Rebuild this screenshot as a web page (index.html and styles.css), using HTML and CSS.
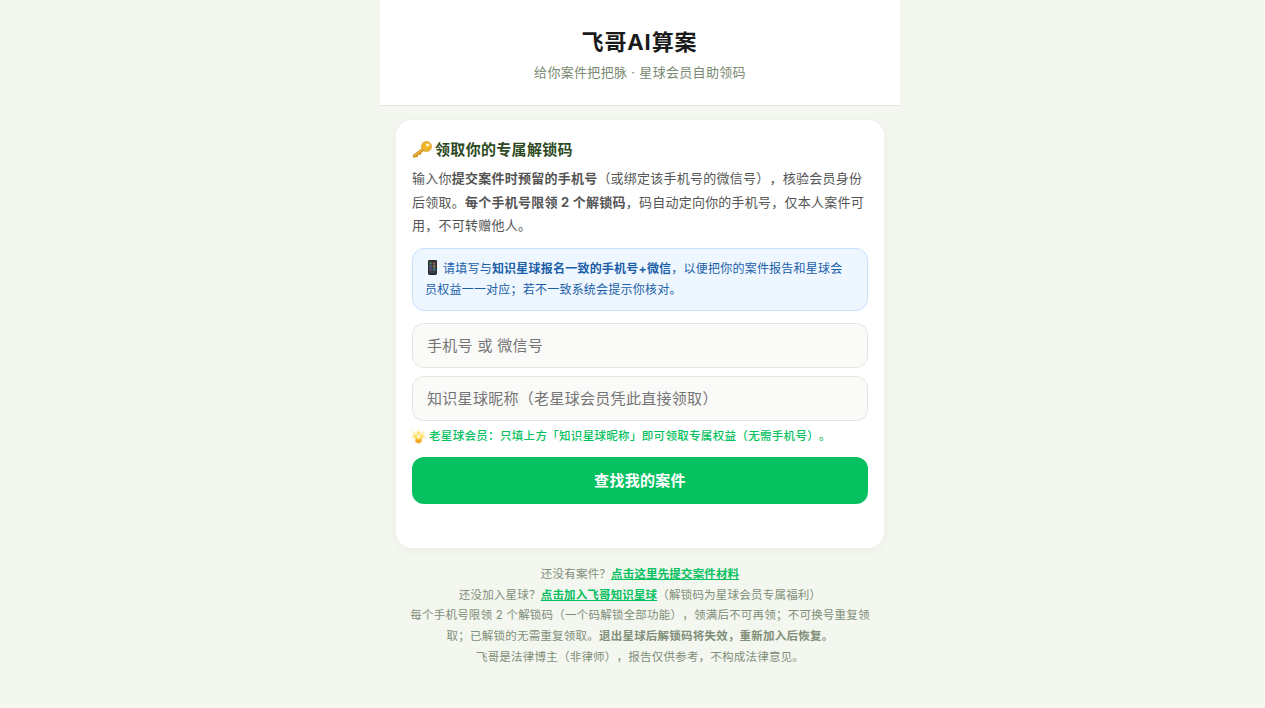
FILE: index.html
```html
<!DOCTYPE html>
<html lang="zh-CN">
<head>
<meta charset="utf-8">
<title>飞哥AI算案</title>
<link rel="stylesheet" href="styles.css">
</head>
<body>
<div class="page">
  <header class="header">
    <h1 class="title">飞哥AI算案</h1>
    <p class="subtitle">给你案件把把脉 · 星球会员自助领码</p>
  </header>
  <main class="main">
    <section class="card">
      <h2 class="card-title"><svg class="icon-key" viewBox="0 0 21 19" aria-hidden="true"><path d="M12 6.5 1.2 14.6c-.5.4-.6.9-.4 1.4l.7 1.4c.3.5.8.6 1.2.3l1.4-1.1 1 .6 1.2-.9-.1-1.2 1.2-.8 1 .5 1.2-.9-.1-1.2 3.6-2.7z" fill="#c98f1c"/><path d="M1.6 15.2 12.4 7l.9 1.1L2.6 16.6z" fill="#e9b53a"/><circle cx="15.2" cy="5.8" r="5.4" fill="#f0b429"/><circle cx="15.2" cy="5.8" r="5.4" fill="none" stroke="#d4941a" stroke-width=".6"/><ellipse cx="16.4" cy="4.2" rx="2" ry="1.6" fill="#fff3c4"/></svg>领取你的专属解锁码</h2>
      <p class="desc">输入你<strong>提交案件时预留的手机号</strong>（或绑定该手机号的微信号），核验会员身份后领取。<strong>每个手机号限领 2 个解锁码</strong>，码自动定向你的手机号，仅本人案件可用，不可转赠他人。</p>
      <div class="notice"><svg class="icon-phone" viewBox="0 0 15 15" aria-hidden="true"><rect x="3" y="0" width="9" height="15" rx="1.4" fill="#2b2b30"/><rect x="4" y="1.6" width="7" height="11.4" fill="#3a4048"/><rect x="4.6" y="2.4" width="2" height="2" fill="#4a8a5a"/><rect x="8.2" y="2.4" width="2" height="2" fill="#a0584a"/><rect x="4.6" y="5.4" width="2" height="2" fill="#4a6aa0"/><rect x="8.2" y="5.4" width="2" height="2" fill="#a08a3a"/><rect x="4.6" y="8.4" width="2" height="2" fill="#8a4a8a"/><rect x="8.2" y="8.4" width="2" height="2" fill="#3a8a8a"/></svg>请填写与<strong>知识星球报名一致的手机号+微信</strong>，以便把你的案件报告和星球会员权益一一对应；若不一致系统会提示你核对。</div>
      <input class="field" type="text" placeholder="手机号 或 微信号">
      <input class="field" type="text" placeholder="知识星球昵称（老星球会员凭此直接领取）">
      <p class="hint"><svg class="icon-star" viewBox="0 0 14 14" aria-hidden="true"><path d="M1 .8 4.3 3.4 7 0l2.7 3.4L13 .8l-.6 4.6L14 8l-3.4 1.6L7 14 3.4 9.6 0 8l1.6-2.6z" fill="#fff0b8"/><path d="M7 2.4 8.6 5.6 12 6.2 9.5 8.6 10 12 7 10.4 4 12l.5-3.4L2 6.2l3.4-.6z" fill="#ffd54f"/><path d="M4.4 9.2 7 10.4l2.6-1.2L10 12l-3 1.8L4 12z" fill="#f7a823"/><circle cx="7" cy="6.8" r="1.8" fill="#fff6c8"/></svg>老星球会员：只填上方「知识星球昵称」即可领取专属权益（无需手机号）。</p>
      <button class="submit" type="button">查找我的案件</button>
    </section>
    <footer class="footer">
      <p>还没有案件？<a href="#">点击这里先提交案件材料</a></p>
      <p>还没加入星球？<a href="#">点击加入飞哥知识星球</a>（解锁码为星球会员专属福利）</p>
      <p>每个手机号限领 2 个解锁码（一个码解锁全部功能），领满后不可再领；不可换号重复领取；已解锁的无需重复领取。<strong>退出星球后解锁码将失效，重新加入后恢复。</strong></p>
      <p>飞哥是法律博主（非律师），报告仅供参考，不构成法律意见。</p>
    </footer>
  </main>
</div>
</body>
</html>
```
FILE: styles.css
```css
* { box-sizing: border-box; }
html, body { margin: 0; padding: 0; }
html { overflow: hidden; }
body {
  width: 1280px;
  background: #f4f6f0;
  font-family: Inter, "Noto Sans CJK SC", sans-serif;
  color: #1a1a1a;
  letter-spacing: 0.02em;
  text-spacing-trim: space-all;
  font-feature-settings: "chws" 0;
}
.page { width: 520px; margin: 0 auto; }
.header {
  background: #fff;
  border-bottom: 1px solid #e5e5df;
  padding: 28px 20px 23px;
  text-align: center;
}
.title {
  margin: 0;
  padding-right: 1px;
  font-size: 22px;
  line-height: 28px;
  font-weight: 700;
  letter-spacing: 0.9px;
  color: #1a1a1a;
}
.subtitle {
  margin: 6px 0 0;
  font-size: 13px;
  line-height: 20px;
  color: #7a8a72;
}
.main { padding: 14px 16px 0; }
.card {
  background: #fff;
  border-radius: 16px;
  box-shadow: 0 2px 12px rgba(0, 0, 0, 0.04);
  padding: 19px 16px 44px;
}
.card-title {
  display: flex;
  align-items: center;
  margin: 0 0 6.4px;
  height: 22px;
  font-size: 15px;
  line-height: 22px;
  font-weight: 700;
  color: #2d4a22;
}
.icon-key { width: 20px; height: 18px; margin-right: 3px; flex: none; }
.desc {
  margin: 0 0 10.4px;
  font-size: 13px;
  line-height: 23.4px;
  letter-spacing: 0.24px;
  color: #555;
}
.desc strong { font-weight: 700; }
.notice {
  background: #eef6ff;
  border: 1px solid #c8e0fb;
  border-radius: 12px;
  padding: 9px 14px 10px 12px;
  font-size: 12px;
  line-height: 21px;
  letter-spacing: 0.22px;
  color: #1a5fa8;
  margin-bottom: 12px;
}
.icon-phone { width: 15px; height: 15px; margin-right: 3px; vertical-align: -2px; }
.field {
  display: block;
  width: 100%;
  height: 45px;
  margin-bottom: 8px;
  padding: 0 14px;
  background: #fafaf8;
  border: 1px solid #e5e5df;
  border-radius: 12px;
  font-family: inherit;
  font-size: 15px;
  font-feature-settings: "chws" 0;
  letter-spacing: 0.3px;
  color: #1a1a1a;
  outline: none;
}
.field::placeholder { color: #757575; opacity: 1; }
.hint {
  display: flex;
  align-items: center;
  height: 14px;
  margin: 0 0 14px;
  font-size: 11.5px;
  line-height: 14px;
  font-weight: 500;
  color: #07c160;
}
.icon-star { width: 15px; height: 15px; margin: 0 3px 0 -1px; flex: none; }
.submit {
  display: block;
  width: 100%;
  height: 47px;
  padding: 0 0 2px;
  border: 0;
  border-radius: 12px;
  background: #07c160;
  color: #fff;
  font-family: inherit;
  font-feature-settings: "chws" 0;
  font-size: 15px;
  font-weight: 700;
  letter-spacing: 0.02em;
}
.footer {
  padding: 16px 14px 0;
  text-align: center;
  font-size: 11.5px;
  line-height: 20.7px;
  letter-spacing: 0.22px;
  color: #808f78;
}
.footer p { margin: 0; }
.footer a { color: #07c160; font-weight: 700; letter-spacing: 0.15px; text-decoration: underline; }
```
